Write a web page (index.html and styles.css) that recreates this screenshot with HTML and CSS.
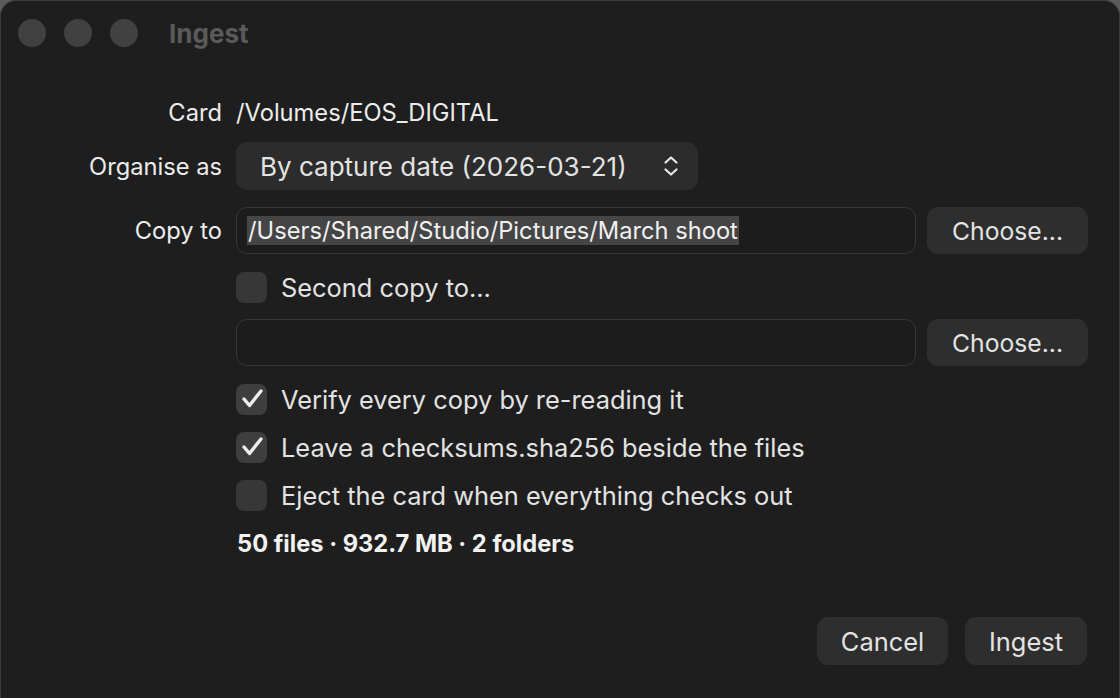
FILE: index.html
```html
<!DOCTYPE html>
<html lang="en">
<head>
<meta charset="utf-8">
<title>Ingest</title>
<link rel="stylesheet" href="styles.css">
</head>
<body>
<div class="window">
  <div class="titlebar">
    <span class="light"></span><span class="light"></span><span class="light"></span>
    <span class="title">Ingest</span>
  </div>
  <div class="form">
    <div class="row row-card">
      <div class="label">Card</div>
      <div class="value">/Volumes/EOS_DIGITAL</div>
    </div>
    <div class="row row-organise">
      <div class="label">Organise as</div>
      <div class="popup">
        <span>By capture date (2026-03-21)</span>
        <svg class="chev" width="16" height="22" viewBox="0 0 16 22"><path d="M2.5 7.5 L8 2.5 L13.5 7.5 M2.5 14.5 L8 19.5 L13.5 14.5" fill="none" stroke="#e6e6e6" stroke-width="2.2" stroke-linecap="round" stroke-linejoin="round"/></svg>
      </div>
    </div>
    <div class="row row-copy">
      <div class="label">Copy to</div>
      <div class="field"><span class="sel">/Users/Shared/Studio/Pictures/March shoot</span></div>
      <div class="button choose">Choose...</div>
    </div>
    <div class="row row-check row-second">
      <div class="label"></div>
      <div class="check"><span class="box"></span><span>Second copy to...</span></div>
    </div>
    <div class="row row-copy row-field2">
      <div class="label"></div>
      <div class="field"></div>
      <div class="button choose">Choose...</div>
    </div>
    <div class="row row-check row-verify">
      <div class="label"></div>
      <div class="check"><span class="box on"><svg width="31" height="31" viewBox="0 0 31 31"><path d="M8 15 L13.5 21.5 L25 7" fill="none" stroke="#ededed" stroke-width="3.4" stroke-linecap="round" stroke-linejoin="round"/></svg></span><span>Verify every copy by re-reading it</span></div>
    </div>
    <div class="row row-check row-leave">
      <div class="label"></div>
      <div class="check"><span class="box on"><svg width="31" height="31" viewBox="0 0 31 31"><path d="M8 15 L13.5 21.5 L25 7" fill="none" stroke="#ededed" stroke-width="3.4" stroke-linecap="round" stroke-linejoin="round"/></svg></span><span>Leave a checksums.sha256 beside the files</span></div>
    </div>
    <div class="row row-check row-eject">
      <div class="label"></div>
      <div class="check"><span class="box"></span><span>Eject the card when everything checks out</span></div>
    </div>
    <div class="row row-summary">
      <div class="label"></div>
      <div class="summary">50 files · 932.7 MB · 2 folders</div>
    </div>
  </div>
  <div class="actions">
    <div class="button cancel">Cancel</div>
    <div class="button ingest">Ingest</div>
  </div>
</div>
</body>
</html>
```

FILE: styles.css
```css
* { box-sizing: border-box; }
html, body {
  margin: 0;
  padding: 0;
  width: 1120px;
  height: 698px;
  overflow: hidden;
  background: #5b5b5b;
}
body {
  font-family: Inter, "Noto Sans", "Liberation Sans", sans-serif;
  color: #e6e6e6;
  font-size: 23.7px;
}
.window {
  width: 1120px;
  height: 698px;
  background: #1e1e1e;
  border-radius: 16px 16px 0 0;
  border-top: 1px solid #3c3c3c;
  border-left: 1px solid #3c3c3c;
  border-right: 1px solid #3c3c3c;
  display: flex;
  flex-direction: column;
}
.titlebar {
  height: 65px;
  display: flex;
  align-items: center;
  padding-left: 17px;
  padding-bottom: 1px;
}
.light {
  width: 28px;
  height: 28px;
  border-radius: 50%;
  background: #414141;
  margin-right: 18px;
}
.title {
  margin-left: 13px;
  font-weight: 700;
  color: #5a5a5a;
  font-size: 26px;
}
.form {
  display: flex;
  flex-direction: column;
}
.row {
  display: flex;
  align-items: center;
}
.label {
  width: 221px;
  text-align: right;
  margin-right: 14px;
  flex: none;
  color: #ececec;
}
.row-card { height: 30px; margin-top: 31px; }
.value { color: #ececec; }
.row-organise { height: 48px; margin-top: 15px; }
.popup {
  width: 462px;
  height: 48px;
  background: #2c2c2c;
  border-radius: 11px;
  display: flex;
  align-items: center;
  justify-content: space-between;
  padding: 0 19px 0 24px;
  color: #e3e3e3;
  font-size: 26px;
}
.chev { display: block; }
.row-copy { height: 47px; margin-top: 17px; }
.field {
  width: 680px;
  height: 47px;
  border: 1px solid #363636;
  border-radius: 11px;
  background: #1c1c1c;
  display: flex;
  align-items: center;
  padding-left: 10px;
}
.sel {
  background: #454545;
  color: #f0f0f0;
  line-height: 29px;
  padding: 0 1px;
}
.button {
  background: #2e2e2e;
  border-radius: 11px;
  display: flex;
  align-items: center;
  justify-content: center;
  color: #e3e3e3;
  height: 47px;
  font-size: 25.4px;
}
.choose {
  width: 161px;
  margin-left: 11px;
  font-size: 24.7px;
}
.row-check { height: 31px; }
.row-second { margin-top: 18px; }
.row-field2 { margin-top: 16px; }
.row-verify { margin-top: 18px; }
.row-leave { margin-top: 17px; }
.row-eject { margin-top: 17px; }
.check {
  display: flex;
  align-items: center;
  color: #e3e3e3;
  font-size: 25.4px;
}
.box {
  width: 31px;
  height: 31px;
  border-radius: 8px;
  background: #373737;
  margin-right: 14px;
  display: flex;
  align-items: center;
  justify-content: center;
  flex: none;
}
.box svg { display: block; }
.box.on { background: #3e3e3e; }
.row-summary { height: 30px; margin-top: 17px; }
.summary {
  font-weight: 700;
  color: #f2f2f2;
  padding-left: 1px;
}
.actions {
  display: flex;
  justify-content: flex-end;
  margin-top: 59px;
  padding-right: 32px;
  gap: 17px;
}
.cancel { width: 131px; height: 48px; }
.ingest { width: 122px; height: 48px; }
```
